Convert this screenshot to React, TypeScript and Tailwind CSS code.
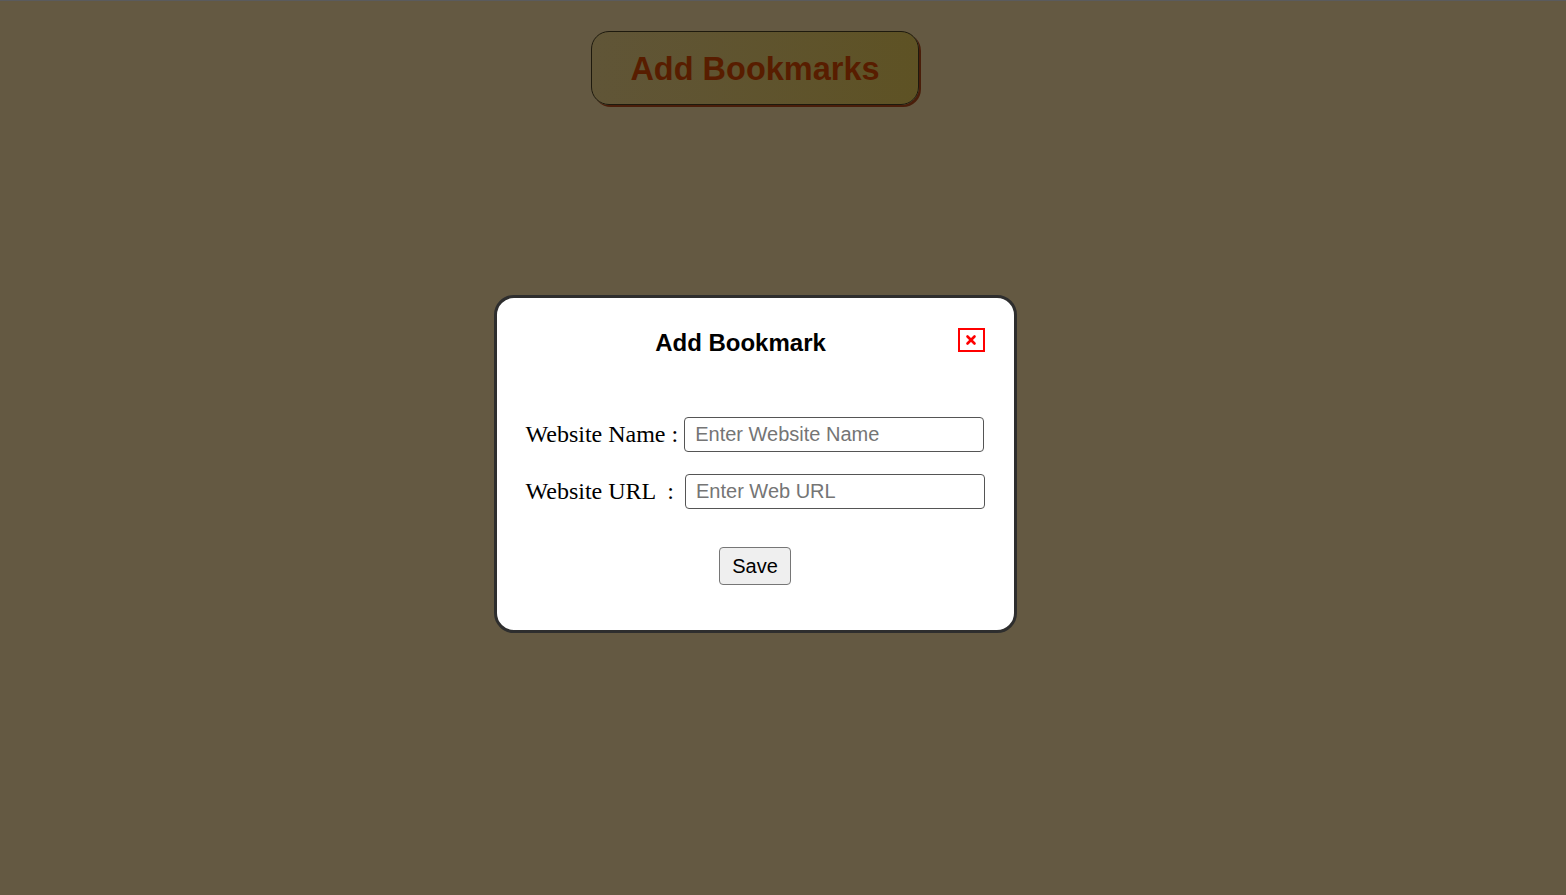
import { X } from "lucide-react";

export default function App() {
  return (
    <div className="min-h-screen w-full border-t border-[#5a5b5e] bg-[#645942] font-['Liberation_Sans',Arial,sans-serif]">
      <div className="flex w-[1510px] flex-col items-center pt-[30px]">
        <button className="h-[74px] w-[328px] rounded-[18px] border border-[#1e1a0e] bg-gradient-to-r from-[#605537] to-[#5e5224] pt-[3px] text-[32.5px] font-bold text-[#581d00] shadow-[2px_2px_0_#4a1e0a]">
          Add Bookmarks
        </button>

        <div className="mt-[190px] w-[523px] rounded-[20px] border-[3px] border-[#2e2e2e] bg-white px-[29px] pt-[27px] pb-[45px]">
          <div className="flex items-center gap-[2px]">
            <h2 className="flex-1 text-center text-[24px] font-bold text-black">Add Bookmark</h2>
            <button className="-mt-[6px] flex h-[24px] w-[27px] items-center justify-center border-2 border-[#ff0000] text-[#ff0000]">
              <X className="h-[14px] w-[14px]" strokeWidth={4.5} />
            </button>
          </div>

          <form className="mt-[55px] flex flex-col gap-[21px]">
            <div className="flex items-center">
              <label className="whitespace-pre font-['Liberation_Serif','Times_New_Roman',serif] text-[24px] text-black">
                {"Website Name : "}
              </label>
              <input
                placeholder="Enter Website Name"
                className="h-[35px] w-[300px] rounded-[4px] border border-[#555] px-[10px] text-[20px] placeholder:text-[#757575]"
              />
            </div>
            <div className="flex items-center">
              <label className="whitespace-pre font-['Liberation_Serif','Times_New_Roman',serif] text-[24px] text-black">
                {"Website URL  :  "}
              </label>
              <input
                placeholder="Enter Web URL"
                className="-ml-px h-[35px] w-[300px] rounded-[4px] border border-[#555] px-[10px] text-[20px] placeholder:text-[#757575]"
              />
            </div>
          </form>

          <div className="mt-[38px] flex justify-center">
            <button className="h-[38px] w-[72px] rounded-[4px] border border-[#767676] bg-[#efefef] text-[20px] text-black">
              Save
            </button>
          </div>
        </div>
      </div>
    </div>
  );
}
